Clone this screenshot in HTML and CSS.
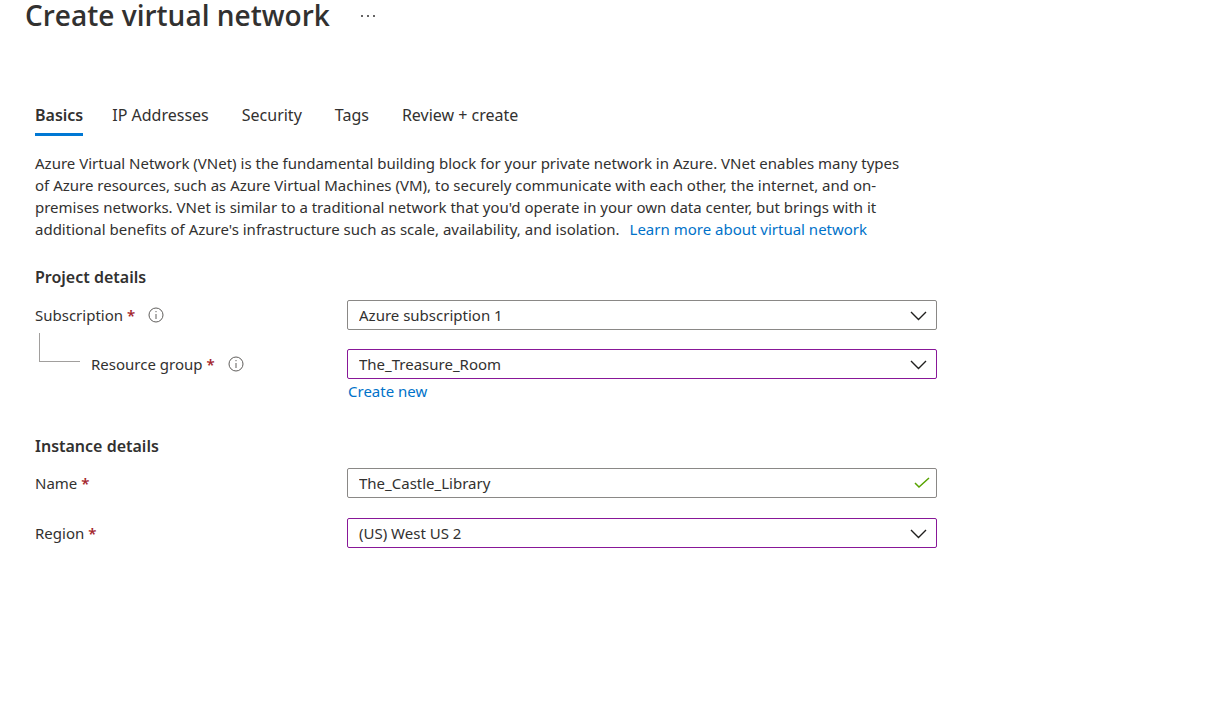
FILE: index.html
```html
<!DOCTYPE html>
<html lang="en">
<head>
<meta charset="utf-8">
<title>Create virtual network</title>
<link rel="stylesheet" href="styles.css">
</head>
<body>
<header class="page-header">
  <h1 class="title">Create virtual network</h1>
  <button class="more" type="button" aria-label="More actions"><svg width="16" height="4" viewBox="0 0 16 4"><circle cx="2" cy="2" r="1"/><circle cx="8" cy="2" r="1"/><circle cx="14" cy="2" r="1"/></svg></button>
</header>
<main class="content">
  <nav class="tabs">
    <a class="tab tab-active" href="#basics">Basics</a>
    <a class="tab" href="#ip">IP Addresses</a>
    <a class="tab" href="#security">Security</a>
    <a class="tab" href="#tags">Tags</a>
    <a class="tab" href="#review">Review + create</a>
  </nav>
  <p class="intro">Azure Virtual Network (VNet) is the fundamental building block for your private network in Azure. VNet enables many types of Azure resources, such as Azure Virtual Machines (VM), to securely communicate with each other, the internet, and on-<wbr>premises networks. VNet is similar to a traditional network that you'd operate in your own data center, but brings with it additional benefits of Azure's infrastructure such as scale, availability, and isolation. <a class="link learn" href="#learn">Learn more about virtual network</a></p>
  <form class="form">
    <h2 class="section">Project details</h2>
    <div class="row row-subscription">
      <div class="label-cell"><label for="subscription">Subscription <span class="required">*</span></label>
        <svg class="info" viewBox="0 0 16 16"><circle cx="8" cy="8" r="7"/><path d="M8 7v5M8 4v1.2"/></svg></div>
      <div class="control">
        <select class="field" id="subscription"><option>Azure subscription 1</option></select>
        <svg class="chevron" viewBox="0 0 17 10"><path d="M1 1l7.5 7.5L16 1"/></svg>
      </div>
    </div>
    <div class="row row-group">
      <div class="label-cell"><span class="branch"></span><label for="group">Resource group <span class="required">*</span></label>
        <svg class="info" viewBox="0 0 16 16"><circle cx="8" cy="8" r="7"/><path d="M8 7v5M8 4v1.2"/></svg></div>
      <div class="control">
        <select class="field field-edited" id="group"><option>The_Treasure_Room</option></select>
        <svg class="chevron" viewBox="0 0 17 10"><path d="M1 1l7.5 7.5L16 1"/></svg>
      </div>
    </div>
    <div class="below-field"><a class="link" href="#new">Create new</a></div>
    <h2 class="section section-instance">Instance details</h2>
    <div class="row row-name">
      <div class="label-cell"><label for="name">Name <span class="required">*</span></label></div>
      <div class="control">
        <input class="field" id="name" type="text" value="The_Castle_Library">
        <svg class="check" viewBox="0 0 16 12"><path d="M1 6l4 4L15 1"/></svg>
      </div>
    </div>
    <div class="row">
      <div class="label-cell"><label for="region">Region <span class="required">*</span></label></div>
      <div class="control">
        <select class="field field-edited" id="region"><option>(US) West US 2</option></select>
        <svg class="chevron" viewBox="0 0 17 10"><path d="M1 1l7.5 7.5L16 1"/></svg>
      </div>
    </div>
  </form>
</main>
</body>
</html>
```
FILE: styles.css
```css
* { box-sizing: border-box; }
body { margin: 0; background: #fff; color: #323130; font: 15px/22px "Segoe UI", "Noto Sans", sans-serif; }
.page-header { display: flex; align-items: center; gap: 30px; height: 30px; padding-left: 25px; }
.title { margin: 0; font-family: "Segoe UI", "Open Sans", sans-serif; font-size: 28px; line-height: 30px; font-weight: 600; }
.more { display: flex; padding: 2px 0 0; border: 0; background: none; }
.more svg { fill: #323130; }
.content { padding: 72px 16px 0 35px; }
.tabs { display: flex; gap: 33px; }
.tab { padding-bottom: 5px; border-bottom: 3px solid transparent; color: #323130; font-size: 16px; line-height: 26px; text-decoration: none; }
.tab-active { margin-right: -4px; border-color: #0078d4; font-weight: 600; }
.intro { max-width: 875px; margin: 16px 0 0; }
.link { color: #0072c9; text-decoration: none; }
.learn { margin-left: 6px; }
.form { max-width: 902px; }
.section { margin: 25px 0 11px; font-size: 16px; line-height: 24px; font-weight: 600; }
.row { display: flex; align-items: center; }
.label-cell { display: flex; align-items: center; width: 312px; gap: 11px; }
.required { color: #a4262c; font-weight: 600; }
.info { width: 16px; height: 16px; margin-left: 2px; fill: none; stroke: #605e5c; }
.control { display: grid; flex: 1; align-items: center; }
.control > * { grid-area: 1 / 1; }
.field { width: 100%; height: 30px; padding: 0 11px; border: 1px solid #8a8886; border-radius: 2px; background: #fff; color: #323130; font: inherit; appearance: none; }
.field-edited { border-color: #881798; }
.chevron { justify-self: end; width: 17px; height: 10px; margin: 2px 10px 0 0; fill: none; stroke: #201f1e; stroke-width: 1.4; pointer-events: none; }
.check { justify-self: end; width: 16px; height: 12px; margin-right: 7px; fill: none; stroke: #57a300; stroke-width: 1.5; }
.row-subscription { margin-bottom: 19px; }
.branch { width: 41px; height: 29px; margin: -34px 0 0 4px; border: solid #a19f9d; border-width: 0 0 1px 1px; }
.below-field { margin: 1px 0 0 313px; }
.section-instance { margin-top: 32px; margin-bottom: 10px; }
.row-name { margin-bottom: 20px; }
```
